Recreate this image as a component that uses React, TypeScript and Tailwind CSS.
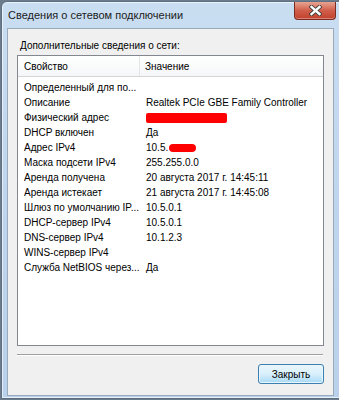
import React from "react";

const rows: [string, React.ReactNode][] = [
  ["Определенный для по...", ""],
  ["Описание", "Realtek PCIe GBE Family Controller"],
  ["Физический адрес", <span className="inline-block w-[81px] h-[10px] bg-[#ff0000] rounded-[2px] align-middle" />],
  ["DHCP включен", "Да"],
  [
    "Адрес IPv4",
    <span className="inline-flex items-center">
      10.5.<span className="inline-block w-[27px] h-[8px] bg-[#ff0000] rounded-full ml-[1px]" />
    </span>,
  ],
  ["Маска подсети IPv4", "255.255.0.0"],
  ["Аренда получена", "20 августа 2017 г. 14:45:11"],
  ["Аренда истекает", "21 августа 2017 г. 14:45:08"],
  ["Шлюз по умолчанию IP...", "10.5.0.1"],
  ["DHCP-сервер IPv4", "10.5.0.1"],
  ["DNS-сервер IPv4", "10.1.2.3"],
  ["WINS-сервер IPv4", ""],
  ["Служба NetBIOS через...", "Да"],
];

export default function App() {
  return (
    <div className="w-[339px] h-[400px] bg-[#6d7c8c] pt-[1px] pl-[1px] overflow-hidden">
      <div className="w-[345px] h-[398px] rounded-t-[6px] border border-[#5e6f82] bg-gradient-to-b from-[#cadef2] via-[#bfd5ed] to-[#b9d1ea] flex flex-col shadow-[inset_0_0_0_1px_rgba(255,255,255,0.6)]">
        <div className="h-[26px] flex items-start relative shrink-0">
          <div
            className="pl-[6px] pt-[6px] text-[11px] leading-[14px] text-[#1b1b1b]"
            style={{ fontFamily: '"Liberation Sans", Arial, sans-serif' }}
          >
            Сведения о сетевом подключении
          </div>
          <div className="absolute left-[292px] top-[0px] w-[42px] h-[18px] rounded-b-[4px] border border-t-0 border-[#7d2c22] bg-gradient-to-b from-[#e6a493] via-[#d05e4a] to-[#c2402c] flex items-center justify-center shadow-[inset_0_-1px_0_rgba(255,255,255,0.35)]">
            <svg width="13" height="11" viewBox="0 0 13 11">
              <path d="M2.5 2 L10.5 9 M10.5 2 L2.5 9" stroke="#3a3a3a" strokeWidth="4.2" strokeLinecap="square" />
              <path d="M2.5 2 L10.5 9 M10.5 2 L2.5 9" stroke="#ffffff" strokeWidth="2.4" strokeLinecap="square" />
            </svg>
          </div>
        </div>
        <div
          className="ml-[5px] w-[327px] h-[368px] bg-[#f0f0f0] border border-[#9aaabd] flex flex-col text-[10px] text-black"
          style={{ fontFamily: '"Liberation Sans", Arial, sans-serif' }}
        >
          <div className="pl-[12px] pt-[11px] h-[26px] leading-[12px]">Дополнительные сведения о сети:</div>
          <div className="ml-[9px] w-[307px] h-[291px] border border-[#828790] bg-white flex flex-col">
            <div className="h-[21px] flex bg-gradient-to-b from-white to-[#f5f6f7] border-b border-[#d5d5d5] shrink-0">
              <div className="w-[122px] border-r border-[#e3e5e8] pl-[6px] flex items-center">Свойство</div>
              <div className="flex-1 pl-[5px] flex items-center">Значение</div>
            </div>
            <div className="pt-[3px] flex flex-col">
              {rows.map(([k, v], i) => (
                <div key={i} className="h-[15px] flex items-center leading-[15px]">
                  <div className="w-[122px] pl-[6px] whitespace-nowrap overflow-hidden">{k}</div>
                  <div className="flex-1 pl-[6px] whitespace-nowrap flex items-center">{v}</div>
                </div>
              ))}
            </div>
          </div>
          <div className="ml-[9px] mt-[8px] w-[306px] h-[2px] border-t border-[#a0a0a0] border-b border-b-white" />
          <div className="flex justify-end pr-[9px] mt-[8px]">
            <div className="w-[66px] h-[20px] rounded-[3px] border border-[#3c7fb1] bg-gradient-to-b from-[#eaf6fd] via-[#d9f0fc] to-[#a7d9f5] shadow-[inset_0_0_0_1px_#e9f6fd] flex items-center justify-center">
              Закрыть
            </div>
          </div>
        </div>
      </div>
    </div>
  );
}
